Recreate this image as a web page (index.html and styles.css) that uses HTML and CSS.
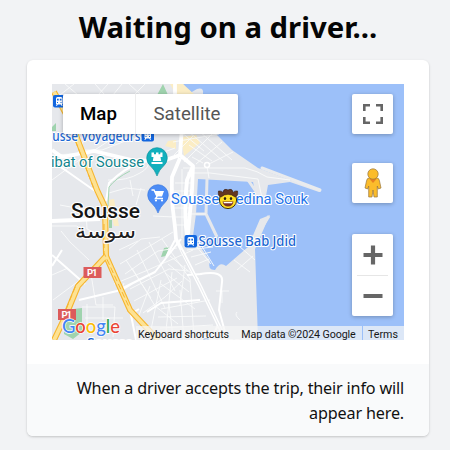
FILE: index.html
```html
<!DOCTYPE html>
<html lang="en">
<head>
<meta charset="utf-8">
<title>Waiting on a driver</title>
<link rel="stylesheet" href="styles.css">
</head>
<body>
<h1 class="title">Waiting on a driver...</h1>
<main class="card">
  <div class="card-body">
    <div class="map">
      <svg class="canvas" viewBox="52 84 352 256">
        <rect class="sea" x="52" y="84" width="352" height="256"/>
        <path class="land" d="M52 84H183L190 93L197 89Q204 87 203 94L202 102L215 133L232 150L258 168L290 180L320 190Q322 192 319 192L290 182L268 185L266 196L271 205H258L253 182L198 179L196 214L193 236L210 261Q207 270 215 270Q220 261 226 266L248 247L260 219L270 215L268 219L255 249L258 340H52Z"/>
        <path class="sand" d="M170 84H183L195 95H176ZM181 137L196 135L200 143L184 156ZM168 141L176 140V149L165 146ZM108 200L114 199L119 226H114Z"/>
        <path class="park" d="M157 95L163 84L168 95ZM52 127L56 123V131H52ZM164 248L169 247L166 256L161 257ZM65 310L82 308V332L73 339L64 334ZM109 220H112V228H109Z"/>
        <g class="pier">
          <path d="M207 179L206 214H196M206 214L217 237M248 180L264 203M269 216L256 237"/>
        </g>
        <path class="jetty" d="M262 168L320 190"/>
        <g class="streets">
          <path d="M60 95L74 84M65 84L78 95M95 84L105 95M108 84L98 95M122 84L113 95M129 84L141 95M145 84L134 95M52 155L73 154M52 180L75 163L107 142M79 149L85 139M85 150H102L128 140M108 180Q127 181 140 173Q150 168 149 159M109 193L126 188L145 190M136 205L141 188M60 205L86 210L87 229L104 237M52 226H77L84 233M130 180L133 196"/>
          <path d="M173 142L219 134M181 132L204 151M189 132L223 161M199 131L232 160M174 155L193 136M184 162L213 133M196 164L222 142M205 166L233 152M189 145L212 161M183 168H245Q258 171 267 177L290 180M207 166L209 178M194 173H210L250 178L258 179L263 203M192 157L203 163"/>
          <path d="M175 183H191M174 191H190M174 199H190M174 208H190M174 217H190M175 225H190M182 169V238M188 172L186 237M184 214H206M156 155L175 148M153 216L174 217"/>
          <path d="M120 264L173 232M114 284L148 270L193 250M126 260L151 298M137 250L165 308M149 242L175 291M162 239L190 279M129 249L141 239L160 237M125 274L158 251L177 248M130 289L169 269L188 271M134 301L177 278M143 313L165 297L182 281M150 286L138 318M161 280L151 330M172 272L166 331M185 265L180 306M132 268L143 286L155 306L178 324M119 250L138 241M124 283L120 294M91 274L96 305H113M87 304V330M103 297V320M82 307H115L113 337M85 318H123M53 300L80 280M52 275L68 268M61 231L70 242L89 260"/>
          <path d="M184 244L208 240M187 250L213 247M191 257L211 252M195 265L209 259M191 240L211 264M198 240L214 266M170 256L187 270L199 279M168 264L190 282M165 273L189 292M161 284L195 309M161 309L210 300M180 290L184 340M190 279L194 337M169 304L173 337M158 317L206 316M160 328L213 325M216 291H229M222 291V303M234 260L250 272M237 270L253 256M239 246L255 260M237 312Q234 315 240 320"/>
        </g>
        <g class="roads">
          <path class="medium" d="M175 84V102L182 127L180 155L166 160L136 161L94 151L62 157L52 150M180 155L193 166L187 180Q183 215 188 242M193 166L192 190L188 234M180 158L172 177Q171 202 175 227L176 239L200 286L219 326L226 340M52 221L100 219"/>
          <path d="M52 161L68 172L95 191L104 205M106 201L109 183Q125 168 139 163M52 255L85 284M79 300L117 291L155 272L181 239M147 312L161 303L200 300M200 274Q224 270 222 282L219 310L225 332M187 275L202 274M120 291L140 279M52 266L62 250M130 310L136 340M218 325L211 340M175 240L166 257M134 312L139 309"/>
        </g>
        <path class="median" d="M181 250L200 286L219 326L226 340"/>
        <circle class="roundabout" cx="207" cy="165" r="2.5"/>
        <path class="bypass" d="M108 206L109 187Q116 178 130 171"/>
        <g class="highway">
          <path class="edge" d="M54 92L72 125L80 146L97 190L105 207L106 256L130 310L158 340M106 256L78 286L66 315L54 340"/>
          <path class="fill" d="M54 92L72 125L80 146L97 190L105 207L106 256L130 310L158 340M106 256L78 286L66 315L54 340"/>
          <path class="dashes" d="M72 132L94 189M104 224V253L129 307M99 260L76 285L63 317"/>
        </g>
        <g class="shield"><rect x="83.500" y="267" width="18" height="11"/><rect x="58" y="309" width="18" height="11"/>
          <text x="87" y="276" textLength="10.5">P1</text><text x="61.5" y="318" textLength="10.5">P1</text></g>
        <g class="station">
          <g id="station-icon" transform="translate(184.500 235)"><rect width="12.5" height="12.5" rx="2"/><path class="glyph" d="M3 3.5Q3 2 4.5 2H8Q9.5 2 9.5 3.5V9H8.8L9.7 10.8H8.5L7.7 9.5H4.8L4 10.8H2.8L3.7 9H3Z"/><path class="window" d="M4 3.8H5.7V5.6H4ZM6.8 3.8H8.5V5.6H6.8ZM4 7H5V8H4ZM7.5 7H8.5V8H7.5Z"/></g>
          <use href="#station-icon" x="-43" y="-106"/>
          <use href="#station-icon" x="-131.500" y="-140"/>
        </g>
        <g class="place">
          <text class="transit" x="38.5" y="140.500" textLength="102" lengthAdjust="spacingAndGlyphs">Sousse Voyageurs</text>
          <text class="museum" x="42" y="167" textLength="102" lengthAdjust="spacingAndGlyphs">Ribat of Sousse</text>
          <text class="market" x="171" y="204" textLength="137" lengthAdjust="spacingAndGlyphs">Sousse Medina Souk</text>
          <text class="transit" x="198.5" y="246" textLength="97.5" lengthAdjust="spacingAndGlyphs">Sousse Bab Jdid</text>
          <text class="transit" x="87" y="348">Sousse</text>
          <text class="transit" x="202" y="348">Sousse</text>
          <text class="city" x="71" y="218" textLength="69" lengthAdjust="spacingAndGlyphs">Sousse</text>
          <text class="arabic" x="105.500" y="237.500" text-anchor="middle" textLength="61" lengthAdjust="spacingAndGlyphs">سوسة</text>
        </g>
        <g>
          <path class="pin-museum" d="M157 176Q155 170 150 165.500A10.300 10.300 0 1 1 164 165.500Q159 170 157 176Z"/>
          <path class="glyph" d="M151.500 152.500H154V154.200H156V152.500H158.500V154.200H160.300V152.500H162.500V157H160.500L161.200 161H152.800L153.500 157H151.500ZM151.500 162H162.500V164H151.500Z"/>
          <path class="pin-market" d="M158 213Q156 207 151 202.500A10.300 10.300 0 1 1 165 202.500Q160 207 158 213Z"/>
          <path class="glyph" d="M154.500 191H164L162 196.500H156.500Z"/>
          <path class="cart" d="M151.500 190H154L157 196.500L155.500 198.500H163"/>
          <circle class="glyph" cx="156" cy="200.500" r="1.100"/><circle class="glyph" cx="162" cy="200.500" r="1.100"/>
        </g>
        <g class="cowboy">
          <circle class="face" cx="228" cy="200" r="8.600"/>
          <path class="hat" d="M218.500 191Q221.500 190.500 223 192.500Q223.500 189 226 189.300L228 190L230 189.300Q232.500 189 233 192.500Q234.500 190.500 237.500 191Q238.500 196 235 197Q232 194.300 228 194.300Q224 194.300 221 197Q217.500 196 218.500 191Z"/>
          <ellipse class="eye" cx="225" cy="198.500" rx="1.200" ry="1.500"/><ellipse class="eye" cx="231" cy="198.500" rx="1.200" ry="1.500"/>
          <path class="mouth" d="M222.500 201.500H233.500Q232.500 206.500 228 206.500Q223.500 206.500 222.500 201.500Z"/><path class="teeth" d="M223.500 202H232.500L232 203.200H224Z"/>
        </g>
        <text class="logo" x="62" y="332.500" textLength="58" lengthAdjust="spacingAndGlyphs"><tspan class="g-blue">G</tspan><tspan class="g-red">o</tspan><tspan class="g-yellow">o</tspan><tspan class="g-blue">g</tspan><tspan class="g-green">l</tspan><tspan class="g-red">e</tspan></text>
      </svg>
      <div class="map-type"><span class="type active">Map</span><span class="type">Satellite</span></div>
      <div class="controls">
        <div class="control"><svg width="20" height="20" viewBox="0 0 20 20"><path class="expand" d="M1.300 7V1.300H7M13 1.300H18.700V7M18.700 13V18.700H13M7 18.700H1.300V13"/></svg></div>
        <div class="control pegman"><svg width="18" height="30" viewBox="0 0 18 30"><path class="body" d="M5 10H13Q15 10 15.500 13L17 20L14.300 21L13.300 18V29H10L9 22L8 29H4.700V18L3.700 21L1 20L2.500 13Q3 10 5 10Z"/><path class="neck" d="M5.500 11H12.500L9 15Z"/><circle class="body" cx="9" cy="6" r="5.200"/></svg></div>
        <div class="zoom"><span class="zoom-button"><svg width="20" height="20"><path class="zoom-icon" d="M.500 10H19.500M10 .500V19.500"/></svg></span><span class="zoom-button"><svg width="20" height="20"><path class="zoom-icon" d="M.500 10H19.500"/></svg></span></div>
      </div>
      <div class="credits"><span class="credit shortcuts">Keyboard shortcuts</span><span class="credit data">Map data ©2024 Google</span><span class="credit terms">Terms</span></div>
    </div>
  </div>
  <p class="card-footer">When a driver accepts the trip, their info will appear here.</p>
</main>
</body>
</html>
```
FILE: styles.css
```css
* { box-sizing: border-box; }
body { margin: 0; height: 450px; overflow: hidden; background: #f2f3f5; color: #111; font-family: "Noto Sans", sans-serif; }
.title { margin: 0; padding: 7px 0 0 6px; height: 60px; color: #050505; text-align: center; white-space: nowrap; font-size: 29.3px; line-height: 40px; font-weight: 700; }
.card { width: 402px; height: 376px; margin-left: 27px; border-radius: 6px; overflow: hidden; background: #fff; box-shadow: 0 1px 3px #0002, 0 1px 2px #0001; }
.card-body { height: 304px; padding: 24px 25px; }
.card-footer { margin: 0; height: 72px; padding: 12px 25px; background: #f9fafb; text-align: right; font-size: 16.2px; line-height: 24.5px; letter-spacing: -.18px; }
.map { position: relative; width: 352px; height: 256px; overflow: hidden; font-family: Roboto, sans-serif; }
.canvas { display: block; width: 352px; height: 256px; }
.sea { fill: #9cc0f9; }
.land { fill: #e6e8ec; }
.sand { fill: #fbedc5; }
.park { fill: #9fd3ae; }
.pier { fill: none; stroke: #e6e8ec; stroke-width: 3; }
.jetty { stroke: #e9ebee; stroke-width: 3; stroke-linecap: round; }
.streets { fill: none; stroke: #f9fafb; stroke-width: .9; }
.roads { fill: none; stroke: #fff; stroke-width: 2; stroke-linejoin: round; }
.medium { stroke-width: 3.8; }
.median { fill: none; stroke: #dfe2e7; stroke-width: .7; }
.roundabout { fill: #e6e8ec; stroke: #fff; stroke-width: 1.5; }
.bypass { fill: none; stroke: #a5d6b5; stroke-width: 1; }
.highway { fill: none; stroke-linejoin: round; }
.edge { stroke: #f6b52f; stroke-width: 6; }
.fill { stroke: #fde293; stroke-width: 3.8; }
.dashes { stroke: #f6b52f; stroke-width: 1; stroke-dasharray: 6 3; }
.shield { fill: #dc5b5b; font-size: 9.5px; font-weight: 700; }
.shield text { fill: #fff; }
.station { fill: #1266df; }
.glyph { fill: #fff; }
.window { fill: #1266df; }
.place { stroke: #fff; stroke-width: 2.2px; stroke-linejoin: round; paint-order: stroke; font-size: 14.5px; }
.transit { fill: #1c67d2; font-family: "Noto Sans", sans-serif; font-size: 13.8px; font-weight: 500; }
.museum { fill: #12858d; }
.market { fill: #2475eb; }
.city { fill: #151515; font-size: 20px; font-weight: 500; }
.arabic { fill: #202020; font-family: "DejaVu Sans", sans-serif; font-size: 19px; }
.pin-museum { fill: #12b0bd; stroke: #078d99; stroke-width: .6; }
.pin-market { fill: #4c8cf5; stroke: #3474db; stroke-width: .6; }
.cart { fill: none; stroke: #fff; stroke-width: 1.4; }
.face { fill: #ffdf24; stroke: #45370b; stroke-width: 1; }
.hat { fill: #633721; stroke: #35190e; stroke-width: .6; }
.eye { fill: #292414; }
.mouth { fill: #7b3028; }
.teeth { fill: #fff; }
.logo { font-family: Lato, sans-serif; font-size: 20px; font-weight: 500; stroke: #fff; stroke-width: 1.5px; paint-order: stroke; }
.g-blue { fill: #4285f4; }
.g-red { fill: #ea4335; }
.g-yellow { fill: #fbbc04; }
.g-green { fill: #34a853; }
.map-type { position: absolute; left: 11px; top: 10px; display: flex; height: 40px; background: #fff; border-radius: 2px; box-shadow: 0 1px 4px #0004; font-size: 18.7px; }
.type { width: 102px; line-height: 40px; text-align: center; color: #565656; }
.active { width: 73px; padding-right: 1px; border-right: 1px solid #eee; color: #000; font-weight: 500; }
.controls { position: absolute; right: 11px; top: 10px; display: flex; flex-direction: column; width: 41px; }
.control { display: flex; height: 40px; align-items: center; justify-content: center; background: #fff; border-radius: 2px; box-shadow: 0 1px 4px #0004; }
.pegman { margin: 29px 0 31px; }
.zoom { height: 82px; padding: 0 5px; background: #fff; border-radius: 2px; box-shadow: 0 1px 4px #0004; }
.zoom-button { display: flex; height: 41px; align-items: center; justify-content: center; }
.zoom-button + .zoom-button { border-top: 1px solid #e6e6e6; }
.expand { fill: none; stroke: #666; stroke-width: 2.6; }
.zoom-icon { stroke: #666; stroke-width: 4.2; }
.body { fill: #fbbc2b; stroke: #98763e; stroke-width: .7; }
.neck { fill: #e88122; }
.credits { position: absolute; right: 0; bottom: 0; display: flex; gap: 1px; height: 14px; font-size: 10.7px; line-height: 18px; color: #171717; white-space: nowrap; }
.credit { text-align: center; background: #f5f5f5b8; }
.shortcuts { width: 99px; padding-right: 4px; letter-spacing: -.1px; }
.data { width: 127px; margin-left: -1px; letter-spacing: -.1px; }
.terms { width: 41px; padding-right: 1px; }
```
